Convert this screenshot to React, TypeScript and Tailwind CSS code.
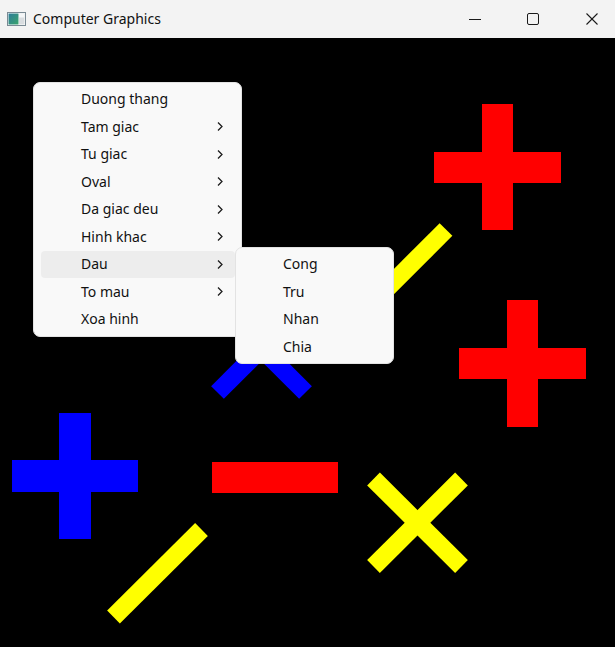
import React from "react";

const font = { fontFamily: '"Segoe UI", "Noto Sans", "Open Sans", sans-serif' };

const Chevron = () => (
  <svg width="8" height="11" viewBox="0 0 8 11" className="block">
    <polyline points="2,1.5 6,5.5 2,9.5" fill="none" stroke="#1b1b1b" strokeWidth="1.25" />
  </svg>
);

const mainItems: { label: string; sub?: boolean; active?: boolean }[] = [
  { label: "Duong thang" },
  { label: "Tam giac", sub: true },
  { label: "Tu giac", sub: true },
  { label: "Oval", sub: true },
  { label: "Da giac deu", sub: true },
  { label: "Hinh khac", sub: true },
  { label: "Dau", sub: true, active: true },
  { label: "To mau", sub: true },
  { label: "Xoa hinh" },
];

const subItems = ["Cong", "Tru", "Nhan", "Chia"];

export default function App() {
  return (
    <div className="relative w-[615px] h-[647px] overflow-hidden bg-black" style={font}>
      {/* Title bar */}
      <div className="flex items-center h-[38px] bg-[#f3f3f3]">
        <svg width="19" height="15" viewBox="0 0 19 15" className="ml-[7px]">
          <defs>
            <linearGradient id="g" x1="0" y1="0" x2="1" y2="1">
              <stop offset="0" stopColor="#2e7d9a" />
              <stop offset="1" stopColor="#3aa36b" />
            </linearGradient>
          </defs>
          <rect x="0.5" y="0.5" width="18" height="13" fill="#fff" stroke="#7a8a94" />
          <rect x="1.5" y="1.5" width="10" height="11" fill="url(#g)" />
          <rect x="12" y="1.5" width="5.5" height="11" fill="#d9dde0" />
          <rect x="12" y="1.5" width="5.5" height="4" fill="#f4f6f7" />
        </svg>
        <span className="ml-[7px] text-[14px] text-[#111] leading-none">Computer Graphics</span>
        <div className="ml-auto mr-[-7px] flex h-full">
          <div className="w-[58px] flex items-center justify-center">
            <svg width="12" height="12" viewBox="0 0 12 12">
              <line x1="0" y1="6.5" x2="12" y2="6.5" stroke="#1a1a1a" strokeWidth="1" />
            </svg>
          </div>
          <div className="w-[58px] flex items-center justify-center">
            <svg width="12" height="12" viewBox="0 0 12 12">
              <rect x="0.5" y="0.5" width="11" height="11" rx="1.5" fill="none" stroke="#1a1a1a" strokeWidth="1" />
            </svg>
          </div>
          <div className="w-[60px] flex items-center justify-center">
            <svg width="12" height="12" viewBox="0 0 12 12">
              <line x1="0.5" y1="0.5" x2="11.5" y2="11.5" stroke="#1a1a1a" strokeWidth="1.1" />
              <line x1="11.5" y1="0.5" x2="0.5" y2="11.5" stroke="#1a1a1a" strokeWidth="1.1" />
            </svg>
          </div>
        </div>
      </div>

      {/* Canvas */}
      <svg width="615" height="609" viewBox="0 38 615 609" className="block">
        <rect x="0" y="38" width="615" height="609" fill="#000" />
        <rect x="482" y="104" width="31" height="126" fill="#ff0000" />
        <rect x="434" y="152" width="127" height="31" fill="#ff0000" />
        <rect x="507" y="300" width="31" height="127" fill="#ff0000" />
        <rect x="459" y="348" width="127" height="31" fill="#ff0000" />
        <rect x="59" y="413" width="32" height="126" fill="#0000ff" />
        <rect x="12" y="460" width="126" height="32" fill="#0000ff" />
        <rect x="212" y="462" width="126" height="31" fill="#ff0000" />
        <line x1="373.5" y1="479" x2="461.5" y2="566.5" stroke="#ffff00" strokeWidth="18" />
        <line x1="461.5" y1="479" x2="373.5" y2="566.5" stroke="#ffff00" strokeWidth="18" />
        <line x1="113.5" y1="617" x2="201.5" y2="529.5" stroke="#ffff00" strokeWidth="18" />
        <line x1="446" y1="229.5" x2="358" y2="317.5" stroke="#ffff00" strokeWidth="18" />
        <line x1="217.5" y1="392.5" x2="305.5" y2="304.5" stroke="#0000ff" strokeWidth="18" />
        <line x1="305.5" y1="392.5" x2="217.5" y2="304.5" stroke="#0000ff" strokeWidth="18" />
      </svg>

      {/* Main context menu */}
      <div className="absolute left-[33px] top-[82px] w-[209px] rounded-[7px] bg-[#f9f9f9] border border-[#e3e3e3] py-[2.5px] pl-[7px] pr-[6px]">
        {mainItems.map((it) => (
          <div
            key={it.label}
            className={`flex items-center h-[27.5px] rounded-[4px] pl-[40px] pr-[11px] text-[14px] text-[#111] ${it.active ? "bg-[#ededed]" : ""}`}
          >
            <span className="flex-1 leading-none">{it.label}</span>
            {it.sub && <Chevron />}
          </div>
        ))}
      </div>

      {/* Submenu */}
      <div className="absolute left-[235px] top-[247px] w-[159px] rounded-[7px] bg-[#f9f9f9] border border-[#e3e3e3] py-[2.5px] pl-[7px] pr-[6px]">
        {subItems.map((s) => (
          <div key={s} className="flex items-center h-[27.5px] rounded-[4px] pl-[40px] text-[14px] text-[#111]">
            <span className="leading-none">{s}</span>
          </div>
        ))}
      </div>
    </div>
  );
}
